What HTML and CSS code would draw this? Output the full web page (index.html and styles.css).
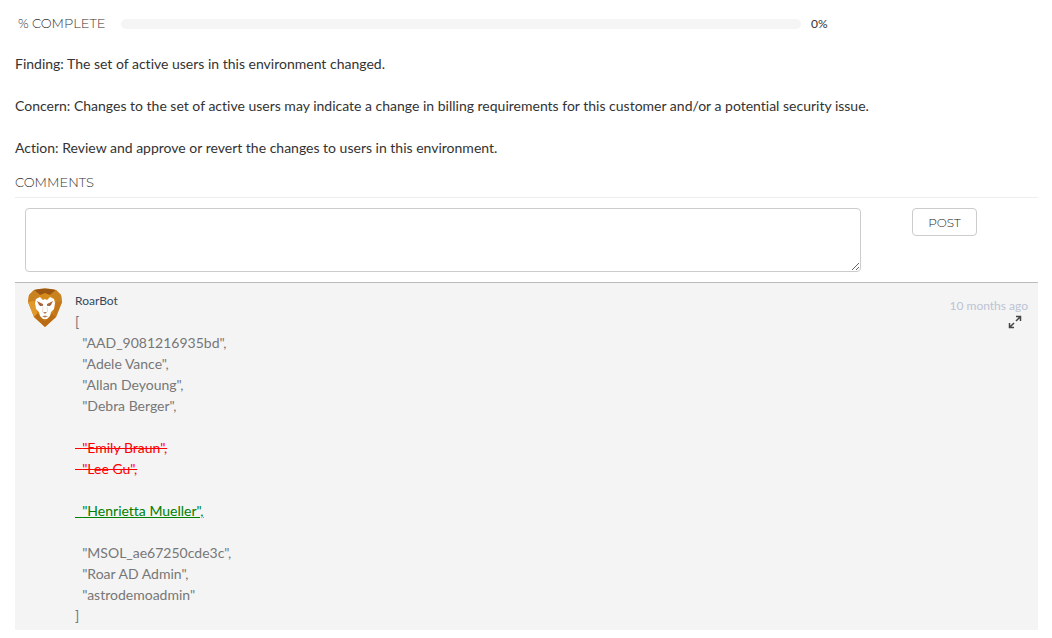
FILE: index.html
```html
<!DOCTYPE html>
<html lang="en">
<head>
    <title>Ticket Details</title>
    <meta charset="UTF-8">
    <meta name="viewport" content="width=device-width, initial-scale=1.0">
    <link rel="stylesheet" href="styles.css">
</head>
<body>
    <div class="progress-row">
        <label class="heading" for="complete">% COMPLETE</label>
        <progress class="bar" id="complete" value="0" max="100"></progress>
        <span class="percent">0%</span>
    </div>

    <div class="description">
        <p>Finding: The set of active users in this environment changed.</p>
        <p>Concern: Changes to the set of active users may indicate a change in billing requirements for this customer and/or a potential security issue.</p>
        <p>Action: Review and approve or revert the changes to users in this environment.</p>
    </div>

    <h2 class="heading comments-title">COMMENTS</h2>

    <form class="comment-form">
        <textarea class="comment-input" aria-label="Comment"></textarea>
        <div class="form-actions">
            <button type="button" class="post-button">POST</button>
        </div>
    </form>

    <div class="comment">
        <svg class="avatar" viewBox="0 0 36 40" aria-hidden="true">
            <path fill="#d78a1c" d="M7 2 Q18 -1 29 2 L34 7 L35 14 L29 29 L18 39 L7 29 L1 14 L2 7z"/>
            <path fill="#9b5712" d="M7 2 Q18 -1 29 2 L23 7 L18 5 L13 7z"/>
            <path fill="#c98220" d="M7 2 L13 7 L7 13 L1 14 L2 7z"/>
            <path fill="#c98220" d="M29 2 L23 7 L29 13 L35 14 L34 7z"/>
            <path fill="#e09a2c" d="M1 14 L7 13 L10 25 L7 29z"/>
            <path fill="#c4771a" d="M35 14 L29 13 L26 25 L29 29z"/>
            <path fill="#b96c14" d="M7 29 L11 25 L18 33 L25 25 L29 29 L18 39z"/>
            <path fill="#fff" d="M9 11 L13 9 L16 12 L18 11 L20 12 L23 9 L27 11 L28 15 L27 21 L24 24 L23 28 L20 31 H16 L13 28 L12 24 L9 21 L8 15z"/>
            <path fill="#b5673a" d="M10 13 L16 16 L16 18 L12 17z M26 13 L20 16 L20 18 L24 17z"/>
            <path fill="#7a5b48" d="M12 16 L15.500 17.500 L13 18z M24 16 L20.500 17.500 L23 18z"/>
            <path fill="#b08060" d="M16 24 H20 L18 26z M15 28.500 L18 27.500 L21 28.500 L18 29.500z"/>
            <path fill="none" stroke="#e6d2c2" stroke-width=".8" d="M16 19 L15.500 24 M20 19 L20.500 24"/>
        </svg>
        <div class="comment-body">
            <div class="author">RoarBot</div>
            <div class="changes">[
  "AAD_9081216935bd",
  "Adele Vance",
  "Allan Deyoung",
  "Debra Berger",

<del>  "Emily Braun",
  "Lee Gu",</del>

<ins>  "Henrietta Mueller",</ins>

  "MSOL_ae67250cde3c",
  "Roar AD Admin",
  "astrodemoadmin"
]</div>
        </div>
        <div class="comment-meta">
            <span class="time">10 months ago</span>
            <button type="button" class="expand" aria-label="Expand comment">
                <svg viewBox="0 0 14 14" aria-hidden="true">
                    <path d="M8 1.500h4.500V6M12.500 1.500l-4.500 4.500M1.500 8v4.500H6M1.500 12.500L6 8"/>
                </svg>
            </button>
        </div>
    </div>
</body>
</html>
```
FILE: styles.css
```css
* {
    box-sizing: border-box;
}

body {
    margin: 0;
    padding: 13px 14px 8px 15px;
    font-family: Lato, sans-serif;
    font-size: 14px;
    line-height: 21px;
    font-variant-ligatures: none;
    color: #333;
    background: #fff;
}

.heading {
    font-family: Montserrat, Inter, sans-serif;
    font-size: 13px;
    font-weight: 300;
    color: #333;
}

.progress-row {
    display: flex;
    align-items: center;
    padding-left: 3px;
}

.bar {
    appearance: none;
    flex: 1;
    min-width: 0;
    height: 10px;
    margin: 0 10px 0 15px;
    border: none;
    border-radius: 5px;
    background: #f5f5f5;
    overflow: hidden;
}

.bar::-webkit-progress-bar {
    background: #f5f5f5;
}

.bar::-webkit-progress-value {
    background: #2185d0;
}

.percent {
    width: 227px;
    font-size: 12px;
}

.description {
    margin-top: 19px;
}

.description p {
    margin: 0 0 21px;
}

.description p:last-child {
    margin-bottom: 0;
}

.comments-title {
    margin: 14px 0 0;
    padding-bottom: 4px;
    border-bottom: 1px solid #eee;
}

.comment-form {
    display: flex;
    align-items: flex-start;
    padding: 10px;
}

.comment-input {
    flex: 1;
    min-width: 0;
    height: 64px;
    padding: 8px;
    border: 1px solid #ccc;
    border-radius: 4px;
    font: inherit;
    color: inherit;
    resize: both;
}

.form-actions {
    width: 167px;
    text-align: center;
}

.post-button {
    height: 28px;
    padding: 0 15px;
    border: 1px solid #ccc;
    border-radius: 4px;
    background: #fff;
    font-family: Montserrat, Inter, sans-serif;
    font-size: 12px;
    font-weight: 300;
    color: #222;
    cursor: pointer;
}

.comment {
    display: flex;
    padding: 5px 10px 4px 12px;
    border-top: 1px solid #bbb;
    background: #f4f4f4;
}

.avatar {
    flex: none;
    width: 36px;
    height: 40px;
}

.comment-body {
    flex: 1;
    min-width: 0;
    padding-top: 2px;
    padding-left: 12px;
}

.author {
    font-size: 12px;
    color: #34495e;
}

.changes {
    white-space: pre-wrap;
    color: #777;
}

.changes del {
    color: #f00;
}

.changes ins {
    color: #008000;
}

.comment-meta {
    display: flex;
    flex-direction: column;
    align-items: flex-end;
    padding-top: 8px;
    line-height: 19px;
}

.time {
    font-size: 12px;
    color: #bcc3d3;
}

.expand {
    width: 14px;
    height: 14px;
    margin-right: 6px;
    padding: 0;
    border: none;
    background: none;
    cursor: pointer;
}

.expand svg {
    display: block;
    fill: none;
    stroke: #444;
    stroke-width: 1.5;
}
```
